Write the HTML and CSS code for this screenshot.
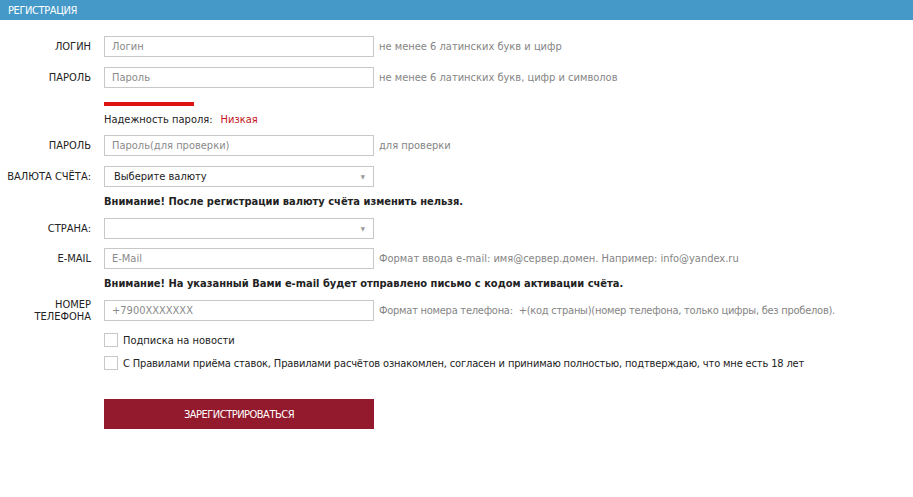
FILE: index.html
```html
<!DOCTYPE html>
<html lang="ru">
<head>
<meta charset="utf-8">
<title>Регистрация</title>
<link rel="stylesheet" href="styles.css">
</head>
<body>
<div class="header">РЕГИСТРАЦИЯ</div>
<form class="form">
  <div class="row">
    <label class="label">ЛОГИН</label>
    <input class="field" type="text" placeholder="Логин">
    <span class="hint">не менее 6 латинских букв и цифр</span>
  </div>
  <div class="row">
    <label class="label">ПАРОЛЬ</label>
    <input class="field" type="text" placeholder="Пароль">
    <span class="hint">не менее 6 латинских букв, цифр и символов</span>
  </div>
  <div class="strength">
    <div class="strength-bar"></div>
    <div class="strength-text">Надежность пароля:<span class="strength-value">Низкая</span></div>
  </div>
  <div class="row">
    <label class="label">ПАРОЛЬ</label>
    <input class="field" type="text" placeholder="Пароль(для проверки)">
    <span class="hint">для проверки</span>
  </div>
  <div class="row">
    <label class="label">ВАЛЮТА СЧЁТА:</label>
    <div class="field select"><span class="select-text">Выберите валюту</span><span class="arrow">▼</span></div>
  </div>
  <div class="warning">Внимание! После регистрации валюту счёта изменить нельзя.</div>
  <div class="row row-country">
    <label class="label">СТРАНА:</label>
    <div class="field select"><span class="select-text"></span><span class="arrow">▼</span></div>
  </div>
  <div class="row">
    <label class="label">E-MAIL</label>
    <input class="field" type="text" placeholder="E-Mail">
    <span class="hint">Формат ввода e-mail: имя@сервер.домен. Например: info@yandex.ru</span>
  </div>
  <div class="warning">Внимание! На указанный Вами e-mail будет отправлено письмо с кодом активации счёта.</div>
  <div class="row row-phone">
    <label class="label label-two">НОМЕР<br>ТЕЛЕФОНА</label>
    <input class="field" type="text" placeholder="+7900XXXXXXX">
    <span class="hint hint-long">Формат номера телефона: <span class="gap"></span>+(код страны)(номер телефона, только цифры, без пробелов).</span>
  </div>
  <div class="check check-first">
    <span class="box"></span><span class="check-text">Подписка на новости</span>
  </div>
  <div class="check">
    <span class="box"></span><span class="check-text check-long">С Правилами приёма ставок, Правилами расчётов ознакомлен, согласен и принимаю полностью, подтверждаю, что мне есть 18 лет</span>
  </div>
  <button class="submit" type="button">ЗАРЕГИСТРИРОВАТЬСЯ</button>
</form>
</body>
</html>
```
FILE: styles.css
```css
* { box-sizing: border-box; }
body {
  margin: 0;
  background: #ffffff;
  font-family: "DejaVu Sans Condensed", "DejaVu Sans", sans-serif;
  font-size: 11px;
  color: #222222;
}
.header {
  height: 20px;
  background: #4499c8;
  color: #ffffff;
  padding-left: 8px;
  line-height: 21px;
  font-size: 11px;
  letter-spacing: -0.4px;
}
.form {
  padding-top: 16px;
}
.row {
  display: flex;
  align-items: center;
  height: 21px;
  margin-bottom: 10px;
}
.label {
  width: 91px;
  margin-right: 13px;
  text-align: right;
  color: #222222;
  flex-shrink: 0;
}
.label-two {
  line-height: 12px;
}
.field {
  width: 270px;
  height: 21px;
  border: 1px solid #c8c8c8;
  padding: 0 7px;
  font-family: inherit;
  font-size: 11px;
  color: #333333;
  background: #ffffff;
  flex-shrink: 0;
  outline: none;
  margin: 0;
}
.field::placeholder { color: #8a8a8a; }
.hint {
  margin-left: 5px;
  color: #858585;
  white-space: nowrap;
}
.hint-long { letter-spacing: -0.25px; }
.gap { display: inline-block; width: 3px; }
.strength {
  margin-left: 104px;
  padding-top: 4px;
}
.strength-bar {
  width: 90px;
  height: 4px;
  background: #e01212;
}
.strength-text {
  margin-top: 7px;
  line-height: 14px;
  color: #222222;
  margin-bottom: 8px;
}
.strength-value {
  color: #c4141c;
  margin-left: 8px;
}
.select {
  display: flex;
  align-items: center;
  justify-content: space-between;
  padding: 0 8px 0 9px;
}
.select-text { color: #222222; }
.arrow {
  font-size: 6px;
  color: #999999;
}
.warning {
  margin-left: 104px;
  font-weight: bold;
  line-height: 14px;
  margin-top: -2px;
  margin-bottom: 9px;
  color: #222222;
}
.row-country { margin-bottom: 9px; }
.row-phone { margin-top: 2px; margin-bottom: 12px; }
.check {
  display: flex;
  align-items: center;
  margin-left: 104px;
  height: 14px;
  margin-bottom: 9px;
}
.box {
  width: 14px;
  height: 14px;
  border: 1px solid #c8c8c8;
  background: #ffffff;
  margin-right: 5px;
  flex-shrink: 0;
}
.check-text { color: #222222; white-space: nowrap; }
.check-long { letter-spacing: -0.15px; }
.submit {
  display: block;
  margin: 29px 0 0 104px;
  width: 270px;
  height: 30px;
  border: 0;
  background: #931a2d;
  color: #ffffff;
  font-family: inherit;
  font-size: 11px;
  letter-spacing: -0.5px;
  padding: 0;
}
```
